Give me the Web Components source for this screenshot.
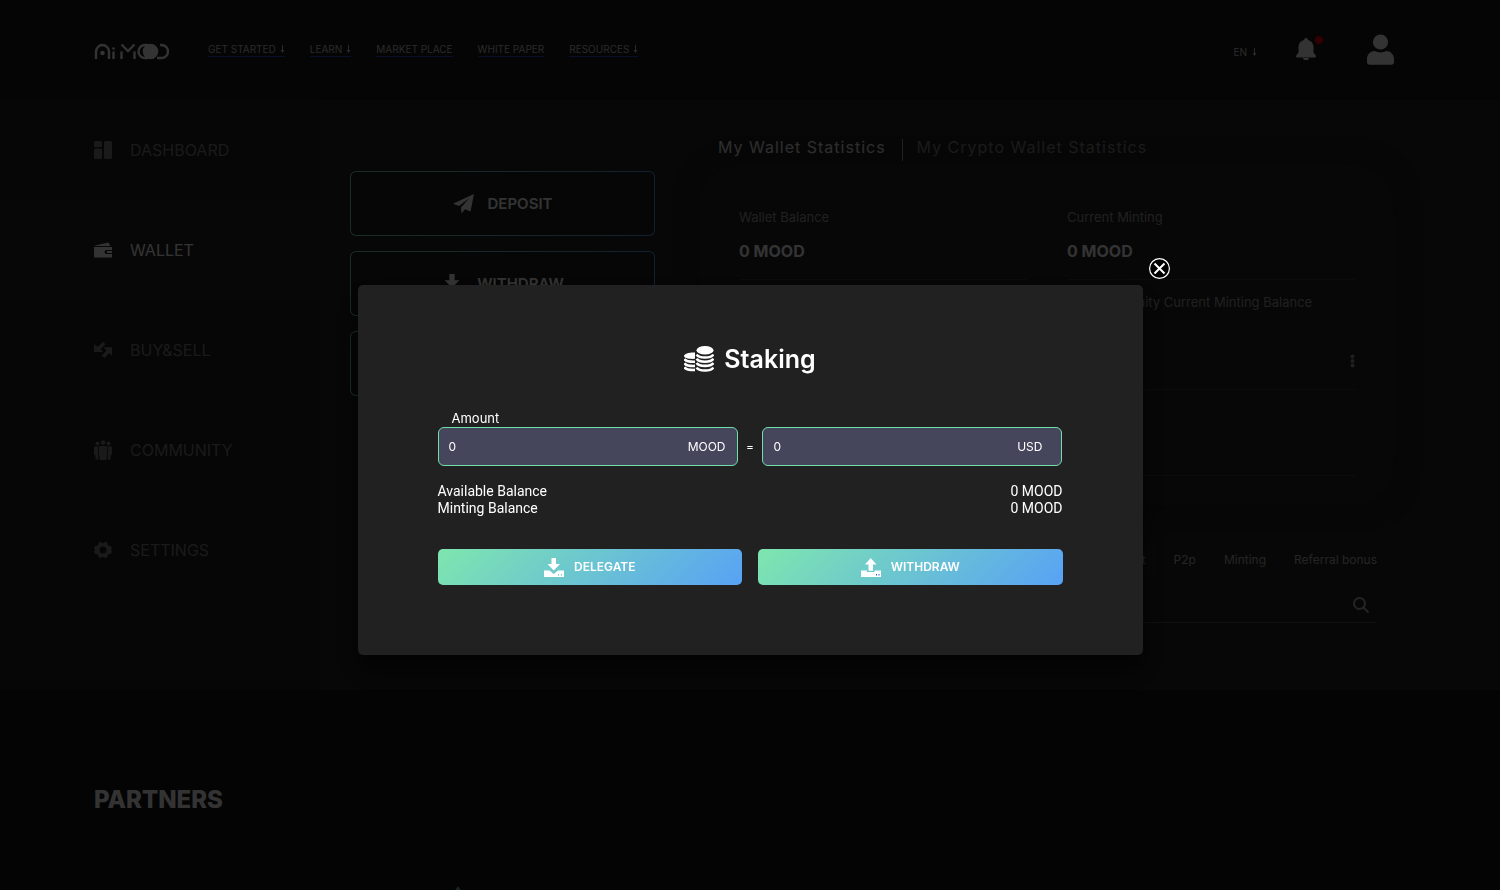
<!DOCTYPE html>
<html lang="en">
<head>
<meta charset="utf-8">
<meta name="viewport" content="width=device-width, initial-scale=1">
<title>AiMood – Wallet</title>
<style>
  html, body { margin: 0; height: 100%; }
  body { background: #141414; color: #fff; font-family: Inter, sans-serif; overflow: hidden; }
</style>
</head>
<body>
<mood-app></mood-app>

<script>
const define = (name, html, setup) => {
  const template = document.createElement('template');
  template.innerHTML = '<style>*{box-sizing:border-box}svg{display:block;fill:currentColor}button,input{font:inherit;color:inherit}</style>' + html;
  customElements.define(name, class extends HTMLElement {
    constructor() {
      super();
      this.attachShadow({ mode: 'open' }).append(template.content.cloneNode(true));
    }
    connectedCallback() { if (setup) setup(this, this.shadowRoot); }
  });
};

/* ---------- header ---------- */
define('nav-link', `
<style>
  :host { display: block; }
  a { display: flex; align-items: center; gap: 4px; height: 15px; border-bottom: 1px solid #2f4bd0;
      color: #cfcfcf; text-decoration: none; font-size: 10px; line-height: 14px; white-space: nowrap; }
  svg { display: none; }
  :host([menu]) svg { display: block; }
</style>
<a href="#"><slot></slot><svg width="5" height="8" viewBox="0 0 5 8" aria-hidden="true"><path d="M2 0h1v5h1.500L2.500 8 .5 5H2z"/></svg></a>`,
(host, root) => { root.querySelector('a').href = host.getAttribute('to') || '#'; });

define('mood-header', `
<style>
  :host { display: block; background: #191919; }
  header { display: flex; align-items: center; height: 100px; padding: 0 106px 2px 94px; }
  .logo { color: #fff; margin-right: 39px; padding-top: 4px; }
  nav { display: flex; gap: 25px; flex: 1; }
  .lang, .bell, .user { border: 0; padding: 0; background: none; }
  .lang { display: flex; align-items: center; gap: 5px; padding-top: 5px; font-size: 10px; line-height: 14px; color: #cfcfcf; }
  .bell { position: relative; margin: 0 51px 0 39px; }
  .bell i { position: absolute; top: -2px; right: -7px; width: 8px; height: 8px; border-radius: 50%; background: #f00; }
</style>
<header>
  <a class="logo" href="#" aria-label="AiMood home">
    <svg width="75" height="17" viewBox="0 0 75 17" aria-hidden="true">
      <g fill="none" stroke="currentColor" stroke-width="2.400">
        <path d="M2 16V9a6.500 7 0 0 1 13 0v7"/>
        <path d="M19.500 8.500V16M27.500 8.500V16M40.500 8.500V16M27.500 1.500 34 8l6.500-6.500"/>
        <path d="M54 2h-3a6.500 6.500 0 0 0 0 13h3M66 2h1.500a6.500 6.500 0 0 1 0 13H63"/>
      </g>
      <circle cx="8.500" cy="10" r="2.300"/><circle cx="19.500" cy="5.500" r="1.300"/>
      <circle cx="56.500" cy="8.500" r="7.800"/>
    </svg>
  </a>
  <nav aria-label="Main">
    <nav-link menu to="#start">GET STARTED</nav-link>
    <nav-link menu to="#learn">LEARN</nav-link>
    <nav-link to="#market">MARKET PLACE</nav-link>
    <nav-link to="#paper">WHITE PAPER</nav-link>
    <nav-link menu to="#resources">RESOURCES</nav-link>
  </nav>
  <button class="lang" type="button">EN<svg width="5" height="8" viewBox="0 0 5 8" aria-hidden="true"><path d="M2 0h1v5h1.500L2.500 8 .5 5H2z"/></svg></button>
  <button class="bell" type="button" aria-label="Notifications">
    <svg width="20" height="22" viewBox="0 0 20 22"><path d="M10 0a2 2 0 0 1 2 2c3.500 1 5.500 3.500 5.500 7v5.500l2.200 3c.7 1-.1 2.100-1.200 2.100h-17C.4 19.600-.4 18.500.300 17.500l2.200-3V9c0-3.500 2-6 5.500-7a2 2 0 0 1 2-2zM7 20h6a3 2 0 0 1-6 0z"/></svg><i></i>
  </button>
  <button class="user" type="button" aria-label="Account">
    <svg width="27" height="31" viewBox="0 0 27 31"><circle cx="13.500" cy="8" r="7.600"/><path d="M8 17c1.700 1 3.600 1.400 5.500 1.400S17.300 18 19 17c4.500 0 8 3.500 8 8v3c0 1.700-1 2.700-2.700 2.700H2.700C1 30.700 0 29.700 0 28v-3c0-4.500 3.500-8 8-8z"/></svg>
  </button>
</header>`);

/* ---------- side navigation ---------- */
define('side-item', `
<style>
  :host { display: block; color: #828282; }
  :host([active]) { color: #fff; background: #232323; }
  a { display: flex; align-items: center; gap: 18px; height: 100px; padding-left: 94px; color: inherit;
      text-decoration: none; font-size: 16px; line-height: 20px; }
</style>
<a href="#"><slot name="icon"></slot><slot></slot></a>`);

define('side-nav', `
<style>
  :host { display: block; background: #1e1e1e; }
</style>
<nav aria-label="Account">
  <side-item><svg slot="icon" width="18" height="18" viewBox="0 0 18 18"><rect width="8" height="6" rx="1.500"/><rect y="7.500" width="8" height="10.500" rx="1.500"/><rect x="10" width="8" height="18" rx="1.500"/></svg>DASHBOARD</side-item>
  <side-item active><svg slot="icon" width="18" height="18" viewBox="0 0 18 18"><path d="M1 4.500 14.500 1.500 16.500 5H1zM0 6h18v3h-5.500a2 2 0 0 0 0 4H18v3.500H0zM13 10h5v2h-5z"/></svg>WALLET</side-item>
  <side-item><svg slot="icon" width="18" height="18" viewBox="0 0 18 18"><path d="M9 .8 11.500 3.200 6.500 8.200 9 11H0V3l2.800 2.600L4.500 5.300zM18 6.200v8.500l-2.800-2.600-4.800 4.900-2.800-2.300L12.500 9.500 9.500 6.200z"/></svg>BUY&amp;SELL</side-item>
  <side-item><svg slot="icon" width="18" height="20" viewBox="0 0 18 20"><circle cx="9" cy="2.500" r="2.300"/><circle cx="3.500" cy="3.500" r="2"/><circle cx="14.500" cy="3.500" r="2"/><path d="M5 6h8v10l-1 4H6l-1-4zM0 6.500h4.200v11.500L5 19.500H1.500V16L0 14zM18 6.500h-4.200v11.500l-.8 1.500h3.500V16l1.500-2z"/></svg>COMMUNITY</side-item>
  <side-item><svg slot="icon" width="18" height="18" viewBox="0 0 18 18"><path fill-rule="evenodd" d="M5 1.200h2.500L9 2.500l1.500-1.300H13l1 3.300 3 .7L18 7.500 16.800 9 18 10.500l-1 2.300-3 .7-1 3.300h-2.500L9 15.500l-1.500 1.300H5l-1-3.300-3-.7-1-2.300L1.200 9 0 7.500l1-2.300 3-.7zM9 5.500a3.500 3.500 0 1 0 0 7 3.500 3.500 0 0 0 0-7z"/></svg>SETTINGS</side-item>
</nav>`);

/* ---------- wallet area ---------- */
define('outline-button', `
<style>
  :host { display: block; }
  button { display: flex; align-items: center; justify-content: center; gap: 14px; width: 100%; height: 65px;
      border: 1px solid transparent; border-radius: 6px; font-size: 15px; line-height: 20px; font-weight: 600;
      background: linear-gradient(#1e1e1e, #1e1e1e) padding-box, linear-gradient(100deg, #7ee6ae, #58a2f5) border-box; }
</style>
<button type="button"><slot name="icon"></slot><slot></slot></button>`);

define('stat-cell', `
<style>
  :host { display: flex; flex-direction: column; justify-content: space-between; min-height: 85px;
      padding: 12px 0 16px; border-bottom: 1px solid #3c3c3c; }
  .label { min-height: 20px; font-size: 13px; line-height: 20px; color: #a0a0a0; white-space: nowrap; }
  .value { min-height: 24px; font-size: 16px; line-height: 24px; font-weight: 700; display: flex; justify-content: space-between; align-items: center; }
</style>
<div class="label"><slot name="label"></slot></div>
<div class="value"><slot></slot></div>`);

define('wallet-stats', `
<style>
  :host { display: block; padding-top: 39px; min-width: 0; }
  .tabs { display: flex; margin: 0 0 4px 18px; height: 22px; }
  .tabs button { border: 0; padding: 0 14px 6px; background: none; font-size: 16px; line-height: 16px; letter-spacing: 1px; color: #828282; white-space: nowrap; }
  .tabs button:first-child { padding-left: 0; padding-right: 16px; color: #e0e0e0; border-right: 1px solid #a0a0a0; }
  .panel { display: grid; grid-template-columns: 1fr 1fr; grid-template-rows: 85px 110px 86px; column-gap: 40px;
      padding: 30px 39px 29px; border-radius: 40px; background: #232323; box-shadow: 0 0 24px #191919; }
  .more { margin-left: auto; border: 0; padding: 0; background: none; color: #a0a0a0; }
</style>
<div class="tabs" role="tablist">
  <button role="tab" aria-selected="true">My Wallet Statistics</button>
  <button role="tab" aria-selected="false">My Crypto Wallet Statistics</button>
</div>
<section class="panel">
  <stat-cell><span slot="label">Wallet Balance</span>0 MOOD</stat-cell>
  <stat-cell><span slot="label">Current Minting</span>0 MOOD</stat-cell>
  <stat-cell></stat-cell>
  <stat-cell><span slot="label">My Community Current Minting Balance</span>
    <button class="more" type="button" aria-label="More"><svg width="5" height="14" viewBox="0 0 5 14"><circle cx="2.500" cy="2.500" r="2"/><circle cx="2.500" cy="7" r="2"/><circle cx="2.500" cy="11.500" r="2"/></svg></button></stat-cell>
  <stat-cell></stat-cell>
  <stat-cell></stat-cell>
</section>`);

define('filter-chip', `
<style>
  :host { display: block; }
  button { height: 34px; padding: 0 10px; border: 0; border-radius: 4px; background: #272727; color: #b4b4b4; font-size: 12px; line-height: 16px; white-space: nowrap; }
</style>
<button type="button"><slot></slot></button>`);

define('history-filter', `
<style>
  :host { display: block; padding: 38px 7px 0 18px; }
  .chips { display: flex; justify-content: flex-end; gap: 8px; }
  .search { display: flex; align-items: center; height: 46px; margin-right: 11px; padding: 10px 7px 0 0; border-bottom: 1px solid #505050; }
  input { flex: 1; min-width: 0; border: 0; outline: 0; background: none; font-size: 12px; line-height: 16px; }
  .search button { border: 0; padding: 0; background: none; color: #b4b4b4; }
</style>
<div class="chips"><filter-chip>Deposit</filter-chip><filter-chip>P2p</filter-chip><filter-chip>Minting</filter-chip><filter-chip>Referral bonus</filter-chip></div>
<div class="search"><input type="search" aria-label="Search history">
  <button type="button" aria-label="Search"><svg width="16" height="16" viewBox="0 0 16 16"><g fill="none" stroke="currentColor" stroke-width="2"><circle cx="6.500" cy="6.500" r="5.500"/><path d="m10.500 10.500 5 5"/></g></svg></button></div>`);

define('wallet-page', `
<style>
  :host { display: grid; grid-template-columns: 305px minmax(0, 1fr); column-gap: 45px; padding: 0 106px 67px 30px; background: #232323; }
  .actions { display: flex; flex-direction: column; gap: 15px; padding-top: 71px; }
</style>
<div class="actions">
  <outline-button><svg slot="icon" width="21" height="20" viewBox="0 0 21 20"><path d="M21 0 17.500 17.500 12 15.200 8.500 19.500 8 13.500 16.500 4 6 12 0 9.800z"/></svg>DEPOSIT</outline-button>
  <outline-button><svg slot="icon" width="22" height="20" viewBox="0 0 20 19"><path d="M7.500 0h5v6H17l-7 7-7-7h4.500zM0 13h5l5 3.500 5-3.500h5v6H0z"/></svg>WITHDRAW</outline-button>
  <outline-button>STAKING</outline-button>
</div>
<div>
  <wallet-stats></wallet-stats>
  <history-filter></history-filter>
</div>`);

define('partners-section', `
<style>
  :host { display: block; padding: 95px 94px 80px; background: #141414; }
  h2 { margin: 0 0 71px; font-size: 24px; line-height: 30px; font-weight: 800; }
  svg { margin-left: 356px; color: #6fc3a0; }
</style>
<h2>PARTNERS</h2>
<svg width="16" height="24" viewBox="0 0 16 24" aria-hidden="true"><path d="M8 0l8 12-8 12L0 12z"/></svg>`);

/* ---------- staking dialog ---------- */
define('unit-field', `
<style>
  :host { display: block; flex: 1; max-width: 300px; }
  .box { display: flex; align-items: center; height: 39px; padding: 0 11px 0 10px; border: 1px solid #70e0ab; border-radius: 6px; background: #45455c; font-size: 12px; line-height: 16px; }
  :host([wide]) .box { padding-right: 19px; }
  input { flex: 1; min-width: 0; border: 0; padding: 0; outline: 0; background: none; }
</style>
<div class="box"><input type="text" inputmode="decimal" value="0"><slot></slot></div>`,
(host, root) => { root.querySelector('input').setAttribute('aria-label', host.getAttribute('label')); });

define('gradient-button', `
<style>
  :host { display: block; flex: 1; }
  button { display: flex; align-items: center; justify-content: center; gap: 10px; width: 100%; height: 36px; padding: 0; border: 0; border-radius: 5px;
      background: linear-gradient(135deg, #7ee6ae, #58a2f5); font-size: 12px; line-height: 16px; font-weight: 600; }
</style>
<button type="button"><slot name="icon"></slot><slot></slot></button>`);

define('staking-dialog', `
<style>
  :host { position: fixed; inset: 0; display: flex; align-items: center; justify-content: center; padding-top: 50px; background: rgba(0,0,0,.8); }
  section { position: relative; width: 785px; max-width: calc(100% - 60px); padding: 58px 80px 70px; border-radius: 5px; background: #212121; box-shadow: 0 15px 25px rgba(0,0,0,.6); }
  .close { position: absolute; top: -27px; right: -27px; padding: 0; border: 0; background: none; }
  h1 { display: flex; align-items: center; justify-content: center; gap: 10px; margin: 0 0 35px; font-size: 25px; line-height: 32px; font-weight: 600; }
  .amount { padding-left: 14px; margin-bottom: 1px; font-size: 13px; line-height: 16px; }
  .fields { display: flex; align-items: center; justify-content: space-between; font-size: 12px; line-height: 16px; margin-bottom: 17px; }
  dl { margin: 0 0 32px; font: 14px/17px Roboto, sans-serif; }
  dl div { display: flex; justify-content: space-between; }
  dd { margin: 0; }
  .buttons { display: flex; gap: 16px; }
</style>
<section role="dialog" aria-modal="true" aria-labelledby="title">
  <button class="close" type="button" aria-label="Close"><svg width="21" height="21" viewBox="0 0 21 21"><g fill="none" stroke="currentColor"><circle cx="10.500" cy="10.500" r="9.900" fill="#000" stroke-width="1.200"/><path stroke-width="2" d="m5.500 5.500 10 10m0-10-10 10"/></g></svg></button>
  <h1 id="title">
    <svg width="30" height="27" viewBox="0 0 30 27" aria-hidden="true">
      <ellipse cx="21" cy="4.300" rx="8.500" ry="4.300"/>
      <path d="M11 6.500v6.300C5 13.200 0 12 0 10 0 8 5 6.300 11 6.500z"/>
      <g fill="none" stroke="currentColor" stroke-width="2.600">
        <path d="M12.700 8.500c2 4 14.600 4 16.600 0M12.700 12.700c2 4 14.600 4 16.600 0M12.700 16.900c2 4 14.600 4 16.600 0M12.700 21.500c2 4 14.600 4 16.600 0"/>
        <path d="M.5 13c1.500 2.200 5.500 2.900 10.500 2.700M.5 17.200c1.500 2.200 5.500 2.900 10.500 2.700M.5 21.200c1.500 2.200 5.500 2.900 10.500 2.700"/>
      </g>
    </svg>Staking</h1>
  <div class="amount">Amount</div>
  <div class="fields"><unit-field label="Amount in MOOD">MOOD</unit-field><span>=</span><unit-field wide label="Amount in USD">USD</unit-field></div>
  <dl>
    <div><dt>Available Balance</dt><dd>0 MOOD</dd></div>
    <div><dt>Minting Balance</dt><dd>0 MOOD</dd></div>
  </dl>
  <div class="buttons">
    <gradient-button><svg slot="icon" width="20" height="19" viewBox="0 0 20 19"><path fill-rule="evenodd" d="M7.500 0h4.500v6h4L9.700 12.500 3.500 6h4zM0 12.500h5.500L9.700 16l4.300-3.500h6V19H0zM14 16v1.500h1V16zM17 16v1.500h1V16z"/></svg>DELEGATE</gradient-button>
    <gradient-button><svg slot="icon" width="20" height="19" viewBox="0 0 20 19"><path d="M9.700 0 15.500 6.500H12v6.300H7.500V6.500H4zM0 12.500h6V14h7.500v-1.500H20V19H0z"/><path fill="#3a55c8" d="M15 16h1v1.500h-1zM17.500 16h1v1.500h-1z"/></svg>WITHDRAW</gradient-button>
  </div>
</section>`,
(host, root) => { root.querySelector('.close').onclick = () => host.remove(); });

define('mood-app', `
<style>
  :host { display: block; height: 100vh; overflow: hidden; }
  .body { display: grid; grid-template-columns: 320px minmax(0, 1fr); }
</style>
<mood-header></mood-header>
<main class="body"><side-nav></side-nav><wallet-page></wallet-page></main>
<partners-section></partners-section>
<staking-dialog></staking-dialog>`);
</script>
</body>
</html>
